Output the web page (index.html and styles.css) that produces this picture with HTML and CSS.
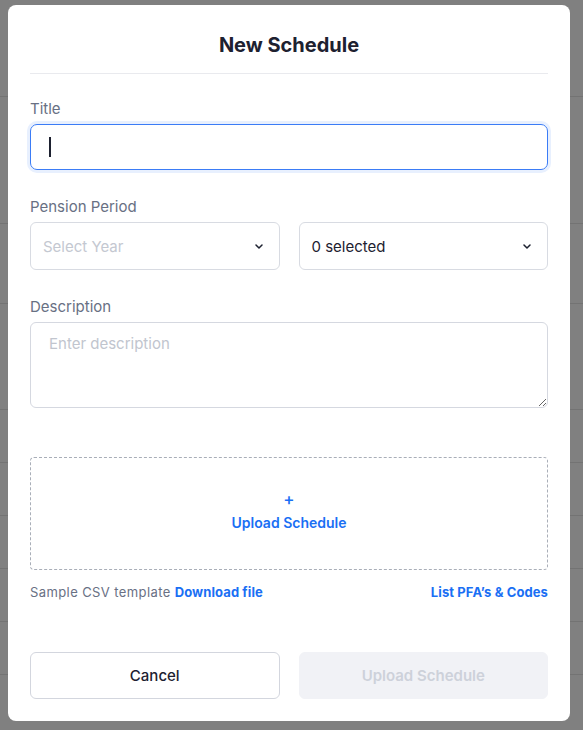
FILE: index.html
```html
<!DOCTYPE html>
<html lang="en">
<head>
<meta charset="utf-8">
<title>New Schedule</title>
<link rel="stylesheet" href="styles.css">
</head>
<body>
<div class="backdrop">
  <div class="bg-row r1"></div>
  <div class="bg-row r2"></div>
  <div class="bg-row r3"></div>
  <div class="bg-row r4"></div>
  <div class="bg-row r5"></div>
  <div class="bg-row r5"></div>
  <div class="bg-row r5"></div>
  <div class="bg-row r5"></div>
  <div class="bg-row r5"></div>
</div>

<div class="modal" role="dialog" aria-labelledby="modal-title">
  <header class="modal-header">
    <h1 id="modal-title" class="modal-title">New Schedule</h1>
  </header>

  <div class="modal-body">
    <div class="field field-title">
      <label class="label">Title</label>
      <div class="input input-focus" role="textbox" aria-label="Title"><span class="caret"></span></div>
    </div>

    <div class="field field-period">
      <label class="label">Pension Period</label>
      <div class="select-row">
        <div class="select">
          <span class="select-text placeholder">Select Year</span>
          <svg class="chevron" width="8" height="5" viewBox="0 0 8 5"><path d="M1 1 L4 4 L7 1" fill="none" stroke="#1d2130" stroke-width="1.5" stroke-linecap="round" stroke-linejoin="round"/></svg>
        </div>
        <div class="select">
          <span class="select-text">0 selected</span>
          <svg class="chevron" width="8" height="5" viewBox="0 0 8 5"><path d="M1 1 L4 4 L7 1" fill="none" stroke="#1d2130" stroke-width="1.5" stroke-linecap="round" stroke-linejoin="round"/></svg>
        </div>
      </div>
    </div>

    <div class="field field-desc">
      <label class="label">Description</label>
      <textarea class="textarea" placeholder="Enter description"></textarea>
    </div>

    <div class="dropzone">
      <span class="plus">+</span>
      <span class="drop-text">Upload Schedule</span>
    </div>

    <div class="links">
      <span class="sample">Sample CSV template <a class="link" href="#">Download file</a></span>
      <a class="link" href="#">List PFA’s &amp; Codes</a>
    </div>

    <div class="actions">
      <button class="btn btn-cancel">Cancel</button>
      <button class="btn btn-upload" disabled>Upload Schedule</button>
    </div>
  </div>
</div>
</body>
</html>
```

FILE: styles.css
```css
* { box-sizing: border-box; }

html, body {
  margin: 0;
  padding: 0;
}

body {
  width: 583px;
  height: 730px;
  overflow: hidden;
  background: #808080;
  font-family: Inter, "Liberation Sans", sans-serif;
  position: relative;
}

.backdrop {
  display: flex;
  flex-direction: column;
}

.bg-row {
  border-bottom: 1px solid #737373;
}
.r1 { height: 97px; }
.r2 { height: 127px; }
.r3 { height: 80px; }
.r4 { height: 106px; }
.r5 { height: 53px; }

.modal {
  position: absolute;
  left: 8px;
  top: 5px;
  width: 562px;
  height: 716px;
  background: #ffffff;
  border-radius: 8px;
  padding: 0 22px;
  display: flex;
  flex-direction: column;
}

.modal-header {
  padding: 27px 0 15px;
  border-bottom: 1px solid #e9eaee;
}

.modal-title {
  margin: 0;
  text-align: center;
  font-size: 20px;
  line-height: 26px;
  font-weight: 700;
  color: #1d2130;
}

.modal-body {
  display: flex;
  flex-direction: column;
}

.field {
  display: flex;
  flex-direction: column;
}

.field-title { margin-top: 25px; }
.field-period { margin-top: 27px; }
.field-desc { margin-top: 27px; }

.label {
  font-size: 15px;
  line-height: 20px;
  color: #687083;
  margin-bottom: 5px;
}

.input {
  height: 46px;
  border: 1px solid #d5d8e0;
  border-radius: 7px;
  display: flex;
  align-items: center;
  padding: 0 18px;
}

.input-focus {
  border-color: #3b7cf6;
  box-shadow: 0 0 0 3px #e8f0fe;
}

.caret {
  display: block;
  width: 2px;
  height: 20px;
  background: #1d2130;
}

.select-row {
  display: grid;
  grid-template-columns: 1fr 1fr;
  column-gap: 19px;
}

.select {
  height: 48px;
  border: 1px solid #d8dbe2;
  border-radius: 6px;
  display: flex;
  align-items: center;
  justify-content: space-between;
  padding: 0 16px 0 12px;
}

.select-text {
  font-size: 15px;
  color: #1d2130;
}

.select-text.placeholder {
  color: #c4c8d1;
}

.chevron { display: block; }

.textarea {
  display: block;
  width: 100%;
  height: 86px;
  border: 1px solid #d5d8e0;
  border-radius: 6px;
  padding: 11px 18px;
  font-family: inherit;
  font-size: 15px;
  color: #1d2130;
  resize: vertical;
  outline: none;
}

.textarea::placeholder {
  color: #c1c5ce;
}

.dropzone {
  margin-top: 49px;
  height: 113px;
  border: 1px dashed #a9aeb8;
  border-radius: 4px;
  display: flex;
  flex-direction: column;
  align-items: center;
  justify-content: center;
  color: #1a6ff4;
  padding-bottom: 4px;
}

.plus {
  font-size: 17px;
  line-height: 16px;
  font-weight: 500;
}

.drop-text {
  margin-top: 6px;
  font-size: 14px;
  line-height: 20px;
  font-weight: 600;
}

.links {
  margin-top: 13px;
  display: flex;
  justify-content: space-between;
  align-items: center;
  font-size: 13px;
  line-height: 18px;
}

.sample {
  color: #697084;
  letter-spacing: 0.4px;
}

.link {
  color: #1a6ff4;
  font-weight: 700;
  text-decoration: none;
  letter-spacing: 0.1px;
}

.actions {
  margin-top: 51px;
  display: grid;
  grid-template-columns: 1fr 1fr;
  column-gap: 19px;
}

.btn {
  height: 47px;
  border-radius: 6px;
  font-family: inherit;
  font-size: 15px;
  font-weight: 500;
  cursor: pointer;
}

.btn-cancel {
  background: #ffffff;
  border: 1px solid #d3d6de;
  color: #1d2130;
}

.btn-upload {
  background: #f1f2f6;
  border: 1px solid #f1f2f6;
  color: #cdd1da;
  font-weight: 600;
}
```
